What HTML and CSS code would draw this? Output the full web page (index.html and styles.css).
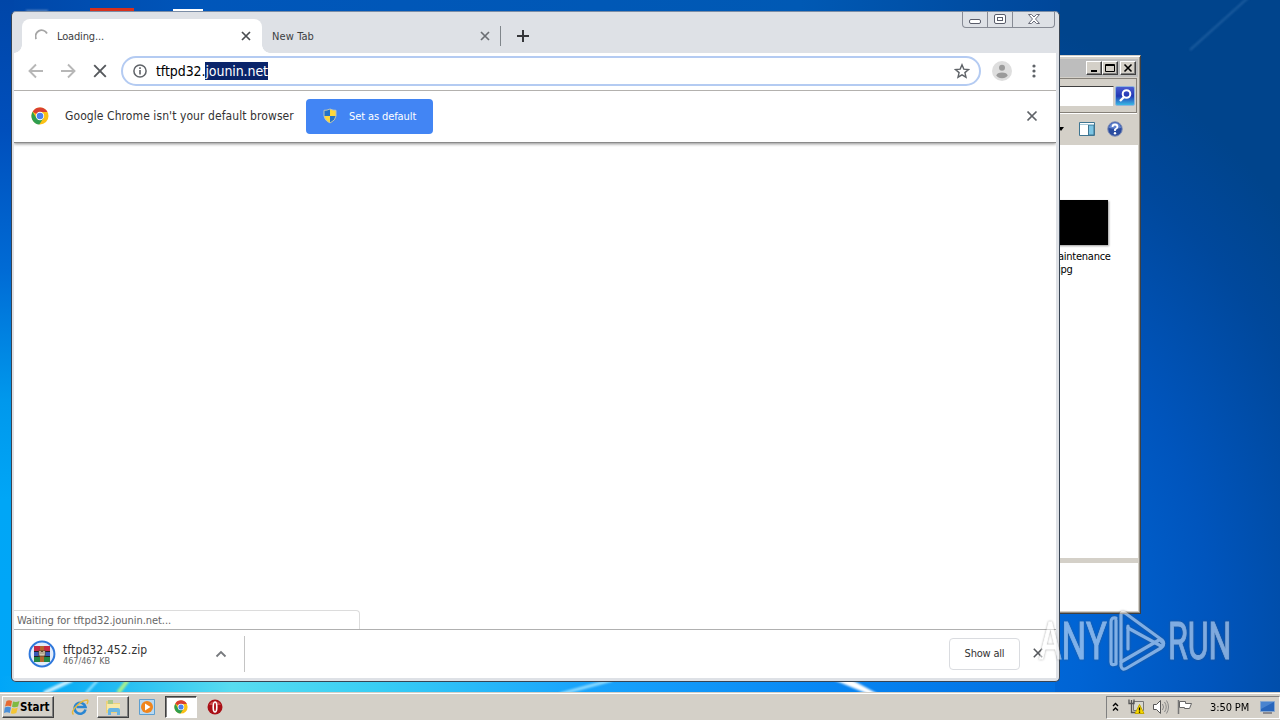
FILE: index.html
```html
<!DOCTYPE html>
<html lang="en">
<head>
    <meta charset="UTF-8">
    <title>Desktop</title>
    <link rel="stylesheet" href="styles.css">
</head>
<body>
    <div class="desktop">
        <!-- Wallpaper -->
        <svg class="wallpaper" width="1280" height="692" viewBox="0 0 1280 692">
            <defs>
                <linearGradient id="bottomGlow" x1="0" x2="1">
                    <stop offset="0" stop-color="#00a6f8"/>
                    <stop offset=".07" stop-color="#10b0f4"/>
                    <stop offset=".22" stop-color="#58dcf0"/>
                    <stop offset=".36" stop-color="#38cdf4"/>
                    <stop offset=".54" stop-color="#1aa6fc"/>
                    <stop offset=".78" stop-color="#0887f4"/>
                    <stop offset="1" stop-color="#006ee0"/>
                </linearGradient>
                <filter id="soft"><feGaussianBlur stdDeviation="1"/></filter>
            </defs>
            <path d="M0 676h1055v16H0z" fill="url(#bottomGlow)"/>
            <g filter="url(#soft)">
                <path d="M26 10h22v2H26z" fill="#5f8ac4"/>
                <path d="M1190 50L1250 -4" stroke="#4d86bd" stroke-width="2" opacity=".4"/>
                <path d="M44 693L72 680" stroke="#c6efff" stroke-width="4"/>
                <path d="M86 693L98 680" stroke="#9be6ff" stroke-width="2"/>
                <path d="M118 693L128 680" stroke="#a9f08c" stroke-width="4"/>
                <path d="M560 694L612 680" stroke="#8fdcff" stroke-width="3"/>
                <path d="M834 680L852 680 878 694 868 694z" fill="#fff"/>
            </g>
            <path d="M90 8h44v4H90z" fill="#d8301c"/>
            <path d="M173 9h30v3H173z" fill="#fff"/>
        </svg>

        <!-- Explorer window behind the browser -->
        <div class="explorer">
            <div class="explorer-title">
                <span class="classic-btn"><svg width="12" height="11"><path d="M3 8h6" stroke="#000" stroke-width="2"/></svg></span>
                <span class="classic-btn"><svg width="12" height="11"><path d="M1.500 1.500h9v7h-9zM1.500 2.500h9" stroke="#000" fill="none"/></svg></span>
                <span class="classic-btn last"><svg width="12" height="11"><path d="M2.500 1.500l7 7M9.500 1.500l-7 7" stroke="#000" stroke-width="1.600"/></svg></span>
            </div>
            <div class="explorer-address">
                <div class="search-field"></div>
                <div class="search-btn"><svg width="18" height="18" viewBox="0 0 18 18"><circle cx="10.500" cy="7" r="3.800" stroke="#fff" stroke-width="2" fill="none"/><path d="M8 10l-4 4" stroke="#fff" stroke-width="2.400"/></svg></div>
            </div>
            <div class="explorer-tools">
                <svg class="drop" width="6" height="4"><path d="M0 0h6L3 4z"/></svg>
                <svg class="pane" width="16" height="14"><path d="M.5.5h15v13H.5z" fill="#fff" stroke="#3f7591"/><path d="M9.500 3v10h5.500V3z" fill="#7cc5e4" stroke="#3f7591"/><path d="M1 2.500h14" stroke="#a5c8d8"/></svg>
                <svg class="help" width="16" height="16" viewBox="0 0 16 16"><circle cx="8" cy="8" r="7.300" fill="#2b4ca0" stroke="#8794b8"/><path d="M2 7a6 5.500 0 0 1 12 0q-6 1-12 0" fill="#6384d0"/><path d="M5.500 6q0-2.500 2.500-2.500T10.500 6Q10.500 7 8 8.500V10" stroke="#fff" stroke-width="1.800" fill="none"/><circle cx="8" cy="12.300" r="1.200" fill="#fff"/></svg>
            </div>
            <div class="explorer-files">
                <div class="thumb"></div>
                <div class="file-name">aintenance<br>jpg</div>
            </div>
            <div class="explorer-details"></div>
        </div>

        <!-- Browser window -->
        <div class="browser">
            <div class="window-btns">
                <span class="wb"><svg width="14" height="12"><rect x="1.500" y="6.500" width="11" height="4" rx="1.500" fill="#fff" stroke="#5a5d6b"/></svg></span>
                <span class="wb"><svg width="14" height="12"><rect x="1.500" y="1.500" width="11" height="9" rx="1.500" fill="#fff" stroke="#5a5d6b"/><rect x="4.500" y="4.500" width="5" height="3" fill="#fff" stroke="#5a5d6b"/></svg></span>
                <span class="wb wide"><svg width="14" height="12"><path d="M1.500 1.500h3l2.500 2.500 2.500-2.500h3L8.500 6l4 4.500h-3L7 8l-2.500 2.500h-3L5.500 6z" fill="#fff" stroke="#6b6d7b"/></svg></span>
            </div>

            <div class="tab-strip">
                <div class="tab active">
                    <svg class="spinner" width="14" height="14"><path d="M1.200 10A6 6 0 0 1 12 4.500" stroke="#a5a5a5" stroke-width="1.800" fill="none"/></svg>
                    <span class="tab-title t-loading">Loading...</span>
                    <svg class="tab-x" width="10" height="10"><path d="M1 1l8 8M9 1L1 9" stroke="#4a4d51" stroke-width="1.700"/></svg>
                </div>
                <div class="tab">
                    <span class="tab-title">New Tab</span>
                    <svg class="tab-x" width="10" height="10"><path d="M1 1l8 8M9 1L1 9" stroke="#6b6e73" stroke-width="1.700"/></svg>
                </div>
                <svg class="new-tab" width="12" height="12"><path d="M6 0v12M0 6h12" stroke="#35363a" stroke-width="2"/></svg>
            </div>

            <div class="toolbar">
                <svg class="nav" width="16" height="16"><path d="M15 8H2M8 1.500L1.500 8 8 14.500" stroke="#b7b7b7" stroke-width="1.900" fill="none"/></svg>
                <svg class="nav" width="16" height="16"><path d="M1 8h13M8 1.500L14.500 8 8 14.500" stroke="#b7b7b7" stroke-width="1.900" fill="none"/></svg>
                <svg class="nav" width="16" height="16"><path d="M2.200 2.200l11.600 11.600M13.800 2.200L2.200 13.800" stroke="#55585c" stroke-width="1.900"/></svg>
                <div class="omnibox">
                    <svg width="14" height="14"><circle cx="7" cy="7" r="6.100" stroke="#5f6368" stroke-width="1.500" fill="none"/><path d="M7 6v4.500M7 3.200v1.700" stroke="#5f6368" stroke-width="1.600"/></svg>
                    <span class="url">tftpd32.<span class="url-sel">jounin.net</span></span>
                    <svg class="star" width="16" height="16" viewBox="0 0 16 16"><path d="M8 1.800l1.800 4.300 4.700.4-3.600 3.100 1.100 4.600L8 11.800l-4 2.400 1.100-4.600-3.600-3.100 4.700-.4z" stroke="#5f6368" stroke-width="1.400" fill="none"/></svg>
                </div>
                <svg class="avatar" width="20" height="20"><circle cx="10" cy="10" r="10" fill="#dedede"/><circle cx="10" cy="6.800" r="3" fill="#9b9b9b"/><ellipse cx="10" cy="14.300" rx="5.500" ry="2.900" fill="#9b9b9b"/></svg>
                <svg class="dots" width="4" height="14"><circle cx="2" cy="2" r="1.600"/><circle cx="2" cy="7" r="1.600"/><circle cx="2" cy="12" r="1.600"/></svg>
            </div>

            <div class="infobar">
                <svg class="chrome-logo" width="18" height="18" viewBox="0 0 18 18"><circle cx="9" cy="9" r="8.500" fill="#fbc116"/><path d="M9 9L1.600 4.700A8.500 8.500 0 0 1 16.500 5H9z" fill="#d93f31"/><path d="M1.600 4.700A8.500 8.500 0 0 0 8.300 17.500L12.500 11 5.500 11z" fill="#2f9e4f"/><circle cx="9" cy="9" r="4.200" fill="#fff"/><circle cx="9" cy="9" r="3.300" fill="#4b82ee"/></svg>
                <span class="info-text">Google Chrome isn't your default browser</span>
                <div class="default-btn">
                    <svg width="14" height="16" viewBox="0 0 14 16"><path d="M7 1Q10 2.500 13 2.300V8Q12.500 12.500 7 15 1.500 12.500 1 8V2.300Q4 2.500 7 1z" fill="#ffd83a"/><path d="M7 1Q10 2.500 13 2.300V8H7zM1 8h6v7Q1.500 12.500 1 8z" fill="#ffd83a"/><path d="M7 1Q4 2.500 1 2.300V8h6zM7 8h6Q12.500 12.500 7 15z" fill="#2472c8"/><path d="M7 1Q10 2.500 13 2.300V8Q12.500 12.500 7 15 1.500 12.500 1 8V2.300Q4 2.500 7 1z" fill="none" stroke="#b9c3b8"/></svg>
                    <span>Set as default</span>
                </div>
                <svg class="info-x" width="12" height="12"><path d="M1.500 1.500l9 9M10.500 1.500l-9 9" stroke="#5f6368" stroke-width="1.700"/></svg>
            </div>

            <div class="page">
                <div class="status">Waiting for tftpd32.jounin.net...</div>
            </div>

            <div class="downloads">
                <svg class="zip" width="28" height="28" viewBox="0 0 28 28"><circle cx="14" cy="14" r="12.400" fill="#e3edfc" stroke="#2f78dc" stroke-width="2"/><path d="M6 6h16v5.500H6z" fill="#c62a44"/><path d="M6 11.500h16v5H6z" fill="#3758b8"/><path d="M6 16.500h16v5.500H6z" fill="#238544"/><path d="M6 11.500h16M6 16.500h16" stroke="#222"/><path d="M12 6h4v16h-4z" fill="#b5662c"/><path d="M10.500 10.500h7v6h-7z" fill="#5b4632"/><path d="M12 11v4h4v-4M14 12v3" stroke="#f4ead0" stroke-width="1.200" fill="none"/></svg>
                <div class="dl-text">
                    <span class="dl-name">tftpd32.452.zip</span>
                    <span class="dl-size">467/467 KB</span>
                </div>
                <svg class="chev" width="12" height="8"><path d="M1.500 6.500L6 2l4.500 4.500" stroke="#777a7e" stroke-width="1.800" fill="none"/></svg>
                <div class="dl-sep"></div>
                <div class="show-all">Show all</div>
                <svg class="dl-x" width="10" height="10"><path d="M.8.8l8.400 8.400M9.200.8L.8 9.200" stroke="#55585c" stroke-width="1.600"/></svg>
            </div>
        </div>

        <!-- Watermark -->
        <svg class="watermark" width="240" height="70" viewBox="0 0 240 70">
            <g class="wm-text">
                <text transform="translate(5 51) scale(.68 1)">ANY</text>
                <text transform="translate(134 51) scale(.63 1)">RUN</text>
            </g>
            <g fill="none" stroke="#fff" stroke-width="3.200" stroke-linejoin="round" stroke-linecap="round">
                <path d="M82 10q-5-1-5 4v40q0 4 5 2V12"/>
                <path d="M94 20l33 18q5-2 1-6L91 5q-4-2-4 2v46"/>
                <path d="M94 18v23M87 54l38-22M87 54v4q1 5 6 2l34-20q5-3 0-7"/>
            </g>
        </svg>
    </div>

    <div class="taskbar">
        <div class="start">
            <svg width="16" height="16" viewBox="0 0 16 16"><path d="M2.500 2Q5 .5 8 2L7 7.500Q4 6 1 7.500z" fill="#e66a32"/><path d="M9 2.500Q12 3.500 15.500 2L14 7.500Q11 9 8 7.700z" fill="#7fba42"/><path d="M.8 8.500Q4 7 7 8.500L5.800 14Q3 12.500 0 14z" fill="#4a8fd8"/><path d="M8 9Q11 10 13.800 8.500L12.300 14Q9.500 15.500 6.800 14.300z" fill="#f4c534"/></svg>
            <span>Start</span>
        </div>
        <div class="quick">
            <svg width="18" height="18" viewBox="0 0 18 18"><path d="M14.500 11.500A5.500 5.500 0 1 1 14.500 9H5.500" stroke="#2a86d2" stroke-width="2.600" fill="none"/><path d="M2.500 16.500Q-.5 14 5.500 8T16.500 2q1 1-.5 4" stroke="#e6b83c" stroke-width="1.500" fill="none"/></svg>
        </div>
        <div class="task raised">
            <svg width="18" height="18" viewBox="0 0 18 18"><path d="M2 3h6l1 2h7v10H2z" fill="#ecd27a"/><path d="M4 2h5v5H4z" fill="#a9c98a"/><path d="M3 6h13v6H3z" fill="#f8e9a8"/><path d="M4 17v-5q0-2 2-2h8q2 0 2 2v5h-3v-3H7v3z" fill="#69b5e2"/></svg>
        </div>
        <div class="task flat">
            <svg width="16" height="16" viewBox="0 0 16 16"><path d="M.5.5h15v15H.5z" fill="#b8d9f2" stroke="#5d9fd0"/><circle cx="8" cy="8" r="6" fill="#f0851c"/><path d="M6 4.500v7L11.500 8z" fill="#fff"/></svg>
        </div>
        <div class="task pressed">
            <svg width="14" height="14" viewBox="0 0 18 18"><circle cx="9" cy="9" r="8.500" fill="#fbc116"/><path d="M9 9L1.600 4.700A8.500 8.500 0 0 1 16.500 5H9z" fill="#d93f31"/><path d="M1.600 4.700A8.500 8.500 0 0 0 8.300 17.500L12.500 11 5.500 11z" fill="#2f9e4f"/><circle cx="9" cy="9" r="4.200" fill="#fff"/><circle cx="9" cy="9" r="3.300" fill="#4b82ee"/></svg>
        </div>
        <div class="task opera">
            <svg width="16" height="16" viewBox="0 0 16 16"><circle cx="8" cy="8" r="7.500" fill="#a90f16"/><path d="M2 6a6.500 5.500 0 0 1 12 0z" fill="#cc4a4c"/><ellipse cx="8" cy="8" rx="1.800" ry="5" fill="#b3161c" stroke="#fff" stroke-width="1.600"/></svg>
        </div>
        <div class="tray">
            <svg width="7" height="10"><path d="M1 4l2.500-2.500L6 4M1 8.500L3.500 6 6 8.500" stroke="#000" stroke-width="1.400" fill="none"/></svg>
            <svg class="net" width="17" height="16"><path d="M5.500 2.500h10v9h-10z" fill="#d8d8d0" stroke="#777"/><path d="M1 .5v4h5v-4M3.500 1v12.500h4" stroke="#555" stroke-width="1.300" fill="none"/><path d="M11.500 5.500l4.500 9H7z" fill="#f8d800" stroke="#c2a600"/><path d="M11.500 8.500v3M11.500 12.500v1.200" stroke="#000" stroke-width="1.300"/></svg>
            <svg class="vol" width="18" height="16"><path d="M1.500 5.500h3l4-4v13l-4-4h-3z" fill="#fff" stroke="#555"/><path d="M10.500 5q2 3 0 6M12.500 3q3.500 5 0 10M14.500 1.500q4 6.500 0 13" stroke="#888" fill="none"/></svg>
            <svg class="flag" width="16" height="16"><path d="M1.500 1v14" stroke="#777" stroke-width="1.500"/><path d="M2.500 2.500h6v2h6l-2 5H7.500v-1h-5z" fill="#fff" stroke="#666"/></svg>
            <span class="clock">3:50 PM</span>
            <svg class="show-desktop" width="15" height="13"><path d="M.5.5h14v10H.5z" fill="#2866bc" stroke="#88a8cf"/><path d="M1 1h13L1 8z" fill="#4a84cf"/><path d="M3 12h9" stroke="#445"/></svg>
        </div>
    </div>
</body>
</html>
```
FILE: styles.css
```css
body {
    margin: 0;
    width: 1280px;
    height: 720px;
    overflow: hidden;
    display: flex;
    flex-direction: column;
    font-family: "DejaVu Sans Condensed", "DejaVu Sans", sans-serif;
    font-stretch: condensed;
    font-size: 11px;
    color: #000;
}
svg {
    display: block;
    flex: none;
}
span {
    white-space: nowrap;
}
.desktop {
    position: relative;
    flex: 1;
    overflow: hidden;
    background:
        linear-gradient(#0046a8 0, #004fbc 130px, #006bd5 270px, #0098ec 400px, #00a6f6 500px, #00a6f8 692px) 0 0 / 14px 692px no-repeat,
        linear-gradient(90deg, #0046a8, #0056ba 200px, #0059b4 800px, #00479a 1060px) 0 0 / 1060px 12px no-repeat,
        radial-gradient(ellipse 520px 640px at 900px 640px, #0072e6 0, #0064d4 35%, #0055bd 60%, #00489c 85%, #00448c 100%);
}
.wallpaper {
    position: absolute;
    left: 0;
    top: 0;
}

/* explorer */
.explorer {
    position: absolute;
    left: 900px;
    top: 55px;
    width: 241px;
    height: 559px;
    box-sizing: border-box;
    display: flex;
    flex-direction: column;
    background: #d4d0c8;
    border: 1px solid #d4d0c8;
    border-right-color: #404040;
    border-bottom-color: #404040;
    box-shadow: inset 1px 1px #fff, inset -1px -1px #908c84;
    padding: 3px 2px 2px 3px;
}
.explorer-title {
    height: 18px;
    display: flex;
    justify-content: flex-end;
    align-items: center;
    background: #bdbdbd;
    padding-right: 2px;
    margin-bottom: 1px;
}
.classic-btn {
    width: 16px;
    height: 14px;
    box-sizing: border-box;
    padding: 1px;
    background: #d4d0c8;
    border: 1px solid #fff;
    border-right-color: #404040;
    border-bottom-color: #404040;
    box-shadow: inset -1px -1px #808080;
}
.classic-btn.last {
    margin-left: 2px;
}
.explorer-address {
    height: 35px;
    box-sizing: border-box;
    display: flex;
    justify-content: flex-end;
    align-items: center;
    gap: 1px;
    padding-right: 1px;
    margin-right: 1px;
    border: 1px solid #858078;
    box-shadow: 0 1px #fff;
}
.search-field {
    width: 80px;
    height: 19px;
    background: #fff;
    border-top: 1px solid #404040;
    border-right: 1px solid #d4d0c8;
}
.search-btn {
    width: 18px;
    height: 18px;
    border: 1px solid #8fb4dc;
    border-radius: 2px;
    background: linear-gradient(#4a5cd0 0, #2238b4 50%, #38b8e4 100%);
}
.explorer-tools {
    height: 32px;
    display: flex;
    align-items: center;
    justify-content: flex-end;
    padding-right: 15px;
}
.drop {
    margin-right: 15px;
}
.pane {
    margin-right: 12px;
}
.explorer-files {
    height: 413px;
    background: #fff;
    display: flex;
    flex-direction: column;
    align-items: flex-end;
    padding-right: 27px;
    box-sizing: border-box;
}
.thumb {
    width: 60px;
    height: 45px;
    margin: 55px 3px 5px 0;
    background: #000;
    box-shadow: 1px 1px 2px #999;
}
.file-name {
    width: 53px;
    line-height: 13px;
    letter-spacing: -0.25px;
    white-space: nowrap;
}
.explorer-details {
    flex: 1;
    margin-top: 5px;
    background: #fff;
}

/* browser */
.browser {
    position: absolute;
    left: 11px;
    top: 11px;
    width: 1049px;
    height: 671px;
    box-sizing: border-box;
    display: flex;
    flex-direction: column;
    border: 1px solid #384453;
    border-top-color: #7b8da6;
    border-radius: 5px;
    background: #dee1e6;
    padding: 0 3px 3px 2px;
}
.window-btns {
    position: absolute;
    right: 4px;
    top: -1px;
    display: flex;
    border: 1px solid #878b95;
    border-top: none;
    border-radius: 0 0 4px 4px;
}
.wb {
    width: 24px;
    height: 16px;
    display: flex;
    justify-content: center;
    align-items: center;
    border-right: 1px solid #878b95;
}
.wb.wide {
    width: 41px;
    border-right: none;
}
.tab-strip {
    height: 41px;
    display: flex;
    align-items: flex-end;
    padding-left: 8px;
}
.tab {
    height: 34px;
    display: flex;
    align-items: center;
    width: 239px;
    box-sizing: border-box;
    padding: 0 10px;
    border-right: 1px solid transparent;
    color: #3c4043;
    background: linear-gradient(#80868b, #80868b) 100% 50% / 1px 20px no-repeat border-box;
}
.tab-title {
    letter-spacing: 0.1px;
}
.t-loading {
    letter-spacing: -0.15px;
}
.tab.active {
    width: 240px;
    background: #fff;
    border-radius: 8px 8px 0 0;
    padding-left: 13px;
    position: relative;
}
.tab.active::before,
.tab.active::after {
    content: "";
    position: absolute;
    bottom: 0;
    width: 8px;
    height: 8px;
}
.tab.active::before {
    left: -8px;
    background: radial-gradient(circle at 0 0, transparent 7.5px, #fff 8px);
}
.tab.active::after {
    right: -9px;
    background: radial-gradient(circle at 100% 0, transparent 7.5px, #fff 8px);
}
.spinner {
    margin-right: 8px;
}
.tab-x {
    margin-left: auto;
}
.new-tab {
    margin: 0 0 11px 16px;
}
.toolbar {
    height: 37px;
    display: flex;
    align-items: flex-start;
    background: #fff;
    border-bottom: 1px solid #b3b1ae;
    padding-left: 14px;
}
.nav {
    margin: 10px 16px 0 0;
}
.omnibox {
    width: 860px;
    height: 30px;
    box-sizing: border-box;
    margin: 3px 0 0 -3px;
    border: 2px solid #b4cbf2;
    border-radius: 15px;
    display: flex;
    align-items: center;
    padding: 0 9px 0 10px;
}
.url {
    margin-left: 9px;
    font-size: 14px;
    line-height: 18px;
    letter-spacing: -0.08px;
}
.url-sel {
    display: inline-block;
    background: #0a246a;
    color: #fff;
}
.star {
    margin-left: auto;
}
.avatar {
    margin: 8px 0 0 11px;
}
.dots {
    margin: 11px 0 0 20px;
    fill: #5f6368;
}
.infobar {
    height: 51px;
    box-sizing: border-box;
    display: flex;
    align-items: center;
    background: #fff;
    padding: 0 18px 2px 17px;
    margin-bottom: 1px;
    position: relative;
    box-shadow: 0 1px #8a8a8a, 0 2px 3px rgba(0, 0, 0, .45);
    clip-path: inset(0 0 -5px 0);
}
.info-text {
    margin-left: 16px;
    width: 229px;
    font-size: 12px;
    letter-spacing: 0.08px;
    color: #333;
}
.default-btn {
    margin: 1px 0 0 12px;
    width: 127px;
    height: 35px;
    box-sizing: border-box;
    padding-left: 17px;
    display: flex;
    align-items: center;
    gap: 12px;
    background: #4285f4;
    border-radius: 4px;
    color: #fff;
    letter-spacing: -0.1px;
}
.info-x {
    margin-left: auto;
}
.page {
    flex: 1;
    background: #fff;
    display: flex;
    align-items: flex-end;
}
.status {
    width: 346px;
    height: 19px;
    box-sizing: border-box;
    border: 1px solid #dcdcdc;
    border-left: none;
    border-bottom: none;
    border-radius: 0 4px 0 0;
    padding-left: 3px;
    line-height: 19px;
    letter-spacing: -0.04px;
    color: #666;
}
.downloads {
    height: 47px;
    display: flex;
    align-items: center;
    background: #fff;
    border-top: 1px solid #b0b0b0;
    padding: 0 13px 1px 14px;
}
.dl-text {
    display: flex;
    flex-direction: column;
    width: 90px;
    margin: 2px 0 0 7px;
}
.dl-name {
    font-size: 12px;
    line-height: 14px;
    letter-spacing: 0.12px;
    color: #333;
}
.dl-size {
    font-size: 9px;
    line-height: 9px;
    color: #666;
}
.chev {
    margin-left: 62px;
}
.dl-sep {
    width: 1px;
    height: 36px;
    margin-left: 17px;
    background: #c4c4c4;
}
.show-all {
    margin-left: auto;
    width: 71px;
    height: 32px;
    box-sizing: border-box;
    border: 1px solid #dadce0;
    border-radius: 4px;
    display: flex;
    align-items: center;
    justify-content: center;
    letter-spacing: -0.2px;
    color: #333;
}
.dl-x {
    margin: -2px 0 0 13px;
}

.watermark {
    position: absolute;
    left: 1034px;
    top: 608px;
    opacity: .5;
    filter: drop-shadow(0 0 1px #555);
}
.wm-text {
    font-family: Roboto, sans-serif;
    font-size: 51px;
    font-stretch: normal;
    fill: #fff;
    stroke: #fff;
    stroke-width: 1px;
}

/* taskbar */
.taskbar {
    height: 28px;
    box-sizing: border-box;
    display: flex;
    align-items: center;
    background: #d4d0c8;
    border-top: 1px solid #d4d0c8;
    box-shadow: inset 0 1px #fff;
    padding-top: 1px;
    position: relative;
}
.start,
.task {
    height: 22px;
    box-sizing: border-box;
    display: flex;
    align-items: center;
}
.start {
    width: 52px;
    margin-left: 2px;
    padding-left: 1px;
    font-weight: bold;
    font-size: 11.5px;
}
.start,
.raised {
    border: 1px solid #fff;
    border-right-color: #404040;
    border-bottom-color: #404040;
    box-shadow: inset -1px -1px #808080;
}
.quick {
    margin: 0 8px 0 17px;
}
.task {
    width: 32px;
    justify-content: center;
}
.flat {
    width: 36px;
}
.pressed {
    background: #fff;
    border: 1px solid #404040;
    border-right-color: #fff;
    border-bottom-color: #fff;
    box-shadow: inset 1px 1px #808080;
}
.opera {
    width: 35px;
}
.tray {
    margin-left: auto;
    width: 174px;
    height: 23px;
    box-sizing: border-box;
    display: flex;
    align-items: center;
    padding-left: 5px;
    border: 1px solid #808080;
    border-right-color: #fff;
    border-bottom-color: #fff;
}
.net {
    margin-left: 9px;
}
.vol {
    margin-left: 7px;
}
.flag {
    margin-left: 7px;
}
.clock {
    margin-left: 17px;
    width: 38px;
    letter-spacing: -0.1px;
}
.show-desktop {
    margin-left: 12px;
}
```
